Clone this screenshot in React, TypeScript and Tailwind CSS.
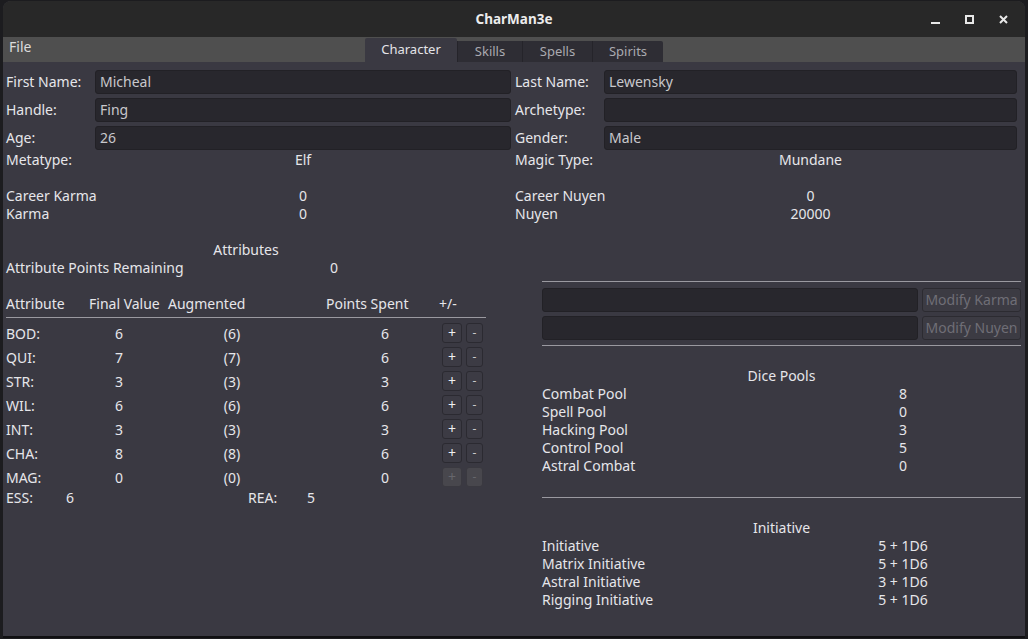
import React from "react";

const attrs = [
  { n: "BOD:", f: "6", a: "(6)", p: "6", d: false },
  { n: "QUI:", f: "7", a: "(7)", p: "6", d: false },
  { n: "STR:", f: "3", a: "(3)", p: "3", d: false },
  { n: "WIL:", f: "6", a: "(6)", p: "6", d: false },
  { n: "INT:", f: "3", a: "(3)", p: "3", d: false },
  { n: "CHA:", f: "8", a: "(8)", p: "6", d: false },
  { n: "MAG:", f: "0", a: "(0)", p: "0", d: true },
];

const pools = [
  ["Combat Pool", "8"],
  ["Spell Pool", "0"],
  ["Hacking Pool", "3"],
  ["Control Pool", "5"],
  ["Astral Combat", "0"],
];

const inits = [
  ["Initiative", "5 + 1D6"],
  ["Matrix Initiative", "5 + 1D6"],
  ["Astral Initiative", "3 + 1D6"],
  ["Rigging Initiative", "5 + 1D6"],
];

function Field({ label, value, w }: { label: string; value: string; w: string }) {
  return (
    <div className={`flex h-[24px] items-center ${w}`}>
      <span className="w-[89px] shrink-0 whitespace-nowrap pb-[2px]">{label}</span>
      <div className="flex-1 h-[24px] rounded-[3px] bg-[#28272d] border border-[#222126] pl-[4px] pb-[2px] flex items-center text-[#c8c8cc]">
        {value}
      </div>
    </div>
  );
}

function InfoRow({ l1, v1, l2, v2 }: { l1: string; v1: string; l2: string; v2: string }) {
  return (
    <div className="flex h-[18px] leading-[18px] whitespace-nowrap">
      <span className="w-[89px] shrink-0">{l1}</span>
      <span className="w-[416px] shrink-0 text-center">{v1}</span>
      <span className="w-[4px] shrink-0" />
      <span className="w-[89px] shrink-0">{l2}</span>
      <span className="w-[413px] shrink-0 text-center">{v2}</span>
    </div>
  );
}

export default function App() {
  return (
    <div className="w-[1028px] h-[639px] bg-[#1c1c1f] overflow-hidden font-['Noto_Sans',sans-serif] text-[14px] text-[#e6e6ea]">
      <div className="ml-[3px] mt-[1px] w-[1022px] h-[637px] flex flex-col rounded-t-[8px] overflow-hidden bg-[#3a3942] border-b-2 border-[#101012]">
        {/* Title bar */}
        <div className="h-[36px] shrink-0 bg-[#282828] grid grid-cols-[1fr_auto_1fr] items-center">
          <div />
          <div className="text-[13.5px] font-bold text-[#ececec] pt-[1px]">CharMan3e</div>
          <div className="flex justify-end items-center pr-[17px] gap-[25px] pt-[1px]">
            <svg width="9" height="9" viewBox="0 0 9 9">
              <rect x="0" y="7" width="9" height="2" fill="#e8e8e8" />
            </svg>
            <svg width="9" height="9" viewBox="0 0 9 9">
              <rect x="1" y="1" width="7" height="7" fill="none" stroke="#e8e8e8" strokeWidth="2" />
            </svg>
            <svg width="9" height="9" viewBox="0 0 9 9">
              <path d="M1 1 L8 8 M8 1 L1 8" stroke="#e8e8e8" strokeWidth="2" />
            </svg>
          </div>
        </div>

        {/* Menu + tabs */}
        <div className="h-[25px] shrink-0 bg-[#4f4f4f] grid grid-cols-[1fr_auto_1fr] items-end">
          <div className="self-start pl-[6px] pt-[1px] leading-[18px] text-[#dcdcdc]">File</div>
          <div className="flex items-end text-[13px]">
            <div className="w-[92px] h-[24px] bg-[#3a3942] rounded-t-[2px] flex items-center justify-center text-[#e4e4e8]">
              Character
            </div>
            <div className="w-[65px] h-[21px] bg-[#2e2d34] border-l border-[#25242a] flex items-center justify-center text-[#aaaab0]">
              Skills
            </div>
            <div className="w-[70px] h-[21px] bg-[#2e2d34] border-l border-[#25242a] flex items-center justify-center text-[#aaaab0]">
              Spells
            </div>
            <div className="w-[71px] h-[21px] bg-[#2e2d34] border-l border-[#25242a] rounded-tr-[2px] flex items-center justify-center text-[#aaaab0]">
              Spirits
            </div>
          </div>
          <div />
        </div>

        {/* Content */}
        <div className="flex-1 pl-[3px] pt-[8px]">
          <div className="flex flex-col gap-[4px]">
            <div className="flex gap-[4px]">
              <Field label="First Name:" value="Micheal" w="w-[505px]" />
              <Field label="Last Name:" value="Lewensky" w="w-[502px]" />
            </div>
            <div className="flex gap-[4px]">
              <Field label="Handle:" value="Fing" w="w-[505px]" />
              <Field label="Archetype:" value="" w="w-[502px]" />
            </div>
            <div className="flex gap-[4px]">
              <Field label="Age:" value="26" w="w-[505px]" />
              <Field label="Gender:" value="Male" w="w-[502px]" />
            </div>
          </div>
          <div className="mt-[1px]">
            <InfoRow l1="Metatype:" v1="Elf" l2="Magic Type:" v2="Mundane" />
          </div>
          <div className="mt-[18px]">
            <InfoRow l1="Career Karma" v1="0" l2="Career Nuyen" v2="0" />
            <InfoRow l1="Karma" v1="0" l2="Nuyen" v2="20000" />
          </div>

          <div className="flex">
            {/* Left: attributes */}
            <div className="w-[480px] pt-[18px]">
              <div className="text-center leading-[18px]">Attributes</div>
              <div className="flex leading-[18px]">
                <span className="w-[298px]">Attribute Points Remaining</span>
                <span className="w-[60px] text-center">0</span>
              </div>
              <div className="mt-[18px] flex leading-[18px] h-[18px] whitespace-nowrap">
                <span className="w-[83px]">Attribute</span>
                <span className="w-[79px]">Final Value</span>
                <span className="w-[158px]">Augmented</span>
                <span className="w-[113px]">Points Spent</span>
                <span>+/-</span>
              </div>
              <div className="mt-[4px] h-px bg-[#9a99a0]" />
              <div className="mt-[3px]">
                {attrs.map((r) => (
                  <div key={r.n} className="flex h-[24px] items-center">
                    <span className="w-[83px]">{r.n}</span>
                    <span className="w-[60px] text-center">{r.f}</span>
                    <span className="w-[166px] text-center">{r.a}</span>
                    <span className="w-[15px]" />
                    <span className="w-[110px] text-center">{r.p}</span>
                    <span className="w-[2px]" />
                    <div className="flex gap-[4px]">
                      <div
                        className={`w-[20px] h-[20px] rounded-[3px] border flex items-center justify-center text-[14px] leading-none ${
                          r.d
                            ? "bg-[#48474d] border-[#3a3940] text-[#66666c]"
                            : "bg-[#3c3b44] border-[#2b2a31] text-[#f0f0f0]"
                        }`}
                      >
                        +
                      </div>
                      <div
                        className={`w-[17px] h-[20px] rounded-[3px] border flex items-center justify-center text-[12px] leading-none ${
                          r.d
                            ? "bg-[#48474d] border-[#3a3940] text-[#66666c]"
                            : "bg-[#3c3b44] border-[#2b2a31] text-[#c8c8cc]"
                        }`}
                      >
                        -
                      </div>
                    </div>
                  </div>
                ))}
              </div>
              <div className="flex h-[18px] leading-[18px]">
                <span className="w-[58px]">ESS:</span>
                <span className="w-[12px] text-center">6</span>
                <span className="ml-[172px] w-[57px]">REA:</span>
                <span className="w-[12px] text-center">5</span>
              </div>
            </div>

            {/* Right: modifiers, pools, initiative */}
            <div className="ml-[56px] w-[479px] pt-[58px]">
              <div className="h-px bg-[#9a99a0]" />
              <div className="mt-[6px] flex flex-col gap-[4px]">
                <div className="flex gap-[4px]">
                  <div className="w-[376px] h-[24px] rounded-[3px] bg-[#28272d] border border-[#222126]" />
                  <div className="flex-1 h-[24px] rounded-[3px] bg-[#3c3b43] border border-[#2c2b31] flex items-center justify-center pb-[2px] text-[#6f6e76] text-[14px] whitespace-nowrap">
                    Modify Karma
                  </div>
                </div>
                <div className="flex gap-[4px]">
                  <div className="w-[376px] h-[24px] rounded-[3px] bg-[#28272d] border border-[#222126]" />
                  <div className="flex-1 h-[24px] rounded-[3px] bg-[#3c3b43] border border-[#2c2b31] flex items-center justify-center pb-[2px] text-[#6f6e76] text-[14px] whitespace-nowrap">
                    Modify Nuyen
                  </div>
                </div>
              </div>
              <div className="mt-[5px] h-px bg-[#9a99a0]" />
              <div className="mt-[21px] text-center leading-[18px]">Dice Pools</div>
              {pools.map(([l, v]) => (
                <div key={l} className="flex h-[18px] leading-[18px]">
                  <span className="w-[311px]">{l}</span>
                  <span className="w-[100px] text-center">{v}</span>
                </div>
              ))}
              <div className="mt-[22px] h-px bg-[#9a99a0]" />
              <div className="mt-[21px] text-center leading-[18px]">Initiative</div>
              {inits.map(([l, v]) => (
                <div key={l} className="flex h-[18px] leading-[18px]">
                  <span className="w-[311px]">{l}</span>
                  <span className="w-[100px] text-center">{v}</span>
                </div>
              ))}
            </div>
          </div>
        </div>
      </div>
    </div>
  );
}
